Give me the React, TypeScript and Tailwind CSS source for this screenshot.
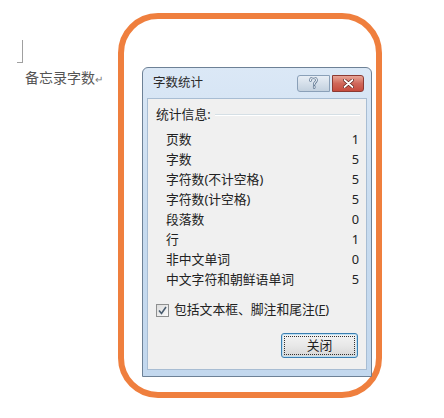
import React from "react";

const rows: [string, string][] = [
  ["页数", "1"],
  ["字数", "5"],
  ["字符数(不计空格)", "5"],
  ["字符数(计空格)", "5"],
  ["段落数", "0"],
  ["行", "1"],
  ["非中文单词", "0"],
  ["中文字符和朝鲜语单词", "5"],
];

const font = { fontFamily: '"Noto Sans", "Noto Sans CJK SC", sans-serif' };

export default function App() {
  return (
    <div className="flex h-[418px] w-[444px] overflow-hidden bg-white" style={font}>
      <DocSide />
      <div className="mt-[13px] h-[385px] w-[264px] shrink-0 rounded-[40px] border-[6px] border-[#ef7f3e] pl-[18px] pt-[48px]">
        <WordCountDialog />
      </div>
    </div>
  );
}

function DocSide() {
  return (
    <div className="w-[118px] shrink-0 pl-[17px] pt-[40px]">
      <div className="h-[23px] w-[6px] border-b border-r border-[#a0a0a0]" />
      <p className="mt-[5px] pl-[8px] text-[14px] leading-[20px] text-[#555]">
        备忘录字数<span className="text-[10px] text-[#777]">↵</span>
      </p>
    </div>
  );
}

function WordCountDialog() {
  return (
    <div className="flex h-[310px] w-[230px] flex-col rounded-t-[6px] border border-[#6d8196] bg-gradient-to-b from-[#dbe8f6] via-[#c7dbef] to-[#c3d8ee] px-[4px] pb-[6px]">
      <div className="flex h-[30px] shrink-0 items-center pl-[6px] pr-[3px]">
        <span className="flex-1 text-[12.5px] text-[#2a2a2a]">字数统计</span>
        <button className="flex h-[17px] w-[33px] items-center justify-center rounded-l-[3px] border border-[#8aa0b8] bg-gradient-to-b from-[#e8eef5] to-[#c3d1df]">
          <svg width="9" height="12" viewBox="0 0 9 12">
            <path
              d="M1.5 3.5 C1.5 1.5 3 0.8 4.5 0.8 C6.3 0.8 7.5 1.8 7.5 3.3 C7.5 5 5.2 5.4 5.2 7.2 M5.2 9.6 L5.2 10.6"
              fill="none"
              stroke="#5d7590"
              strokeWidth="2.6"
              strokeLinecap="round"
            />
            <path
              d="M1.5 3.5 C1.5 1.5 3 0.8 4.5 0.8 C6.3 0.8 7.5 1.8 7.5 3.3 C7.5 5 5.2 5.4 5.2 7.2 M5.2 9.6 L5.2 10.6"
              fill="none"
              stroke="#eef3f8"
              strokeWidth="1.1"
              strokeLinecap="round"
            />
          </svg>
        </button>
        <button className="ml-[2px] flex h-[17px] w-[32px] items-center justify-center rounded-r-[3px] border border-[#8c3a33] bg-gradient-to-b from-[#e8a597] via-[#d0675a] to-[#c64b3e]">
          <svg width="11" height="9" viewBox="0 0 11 9">
            <path d="M1.5 1 L9.5 8 M9.5 1 L1.5 8" stroke="#5a1e18" strokeWidth="3.2" strokeLinecap="round" />
            <path d="M1.5 1 L9.5 8 M9.5 1 L1.5 8" stroke="#fff" strokeWidth="1.8" strokeLinecap="round" />
          </svg>
        </button>
      </div>
      <div className="flex flex-1 flex-col border border-[#a8bdd3] bg-[#f0f0f0] pb-[11px] pl-[8px] pr-[6px] pt-[6px] text-[12.8px] text-[#222]">
        <div className="flex h-[20px] items-center">
          <span>统计信息:</span>
          <div className="ml-[4px] h-0 flex-1 border-b border-t border-b-white border-t-[#d5dfe5]" />
        </div>
        <div className="mt-[5px] flex flex-col pl-[10px]">
          {rows.map(([label, value]) => (
            <div key={label} className="flex h-[20px] items-center justify-between">
              <span>{label}</span>
              <span className="pr-[1px]">{value}</span>
            </div>
          ))}
        </div>
        <label className="mt-[10px] flex h-[20px] items-center">
          <span className="flex h-[13px] w-[13px] items-center justify-center border border-[#8e8f8f] bg-gradient-to-br from-[#dcdcdc] to-[#fbfbfb]">
            <svg width="9" height="9" viewBox="0 0 9 9">
              <path d="M1 4.5 L3.5 7.5 L8 1" fill="none" stroke="#4a5d70" strokeWidth="1.6" />
            </svg>
          </span>
          <span className="ml-[5px]">
            包括文本框、脚注和尾注(<span className="underline">F</span>)
          </span>
        </label>
        <div className="mt-auto flex justify-end pr-[2px]">
          <button className="h-[25px] w-[77px] rounded-[3px] border border-[#3c7fb1] bg-gradient-to-b from-[#f4f4f4] via-[#e8e8e8] to-[#d6d6d6] p-[2px] shadow-[inset_0_0_0_1px_#bfe0f3]">
            <span className="flex h-full w-full items-center justify-center border border-dotted border-[#333] text-[12.8px] text-[#222]">
              关闭
            </span>
          </button>
        </div>
      </div>
    </div>
  );
}
